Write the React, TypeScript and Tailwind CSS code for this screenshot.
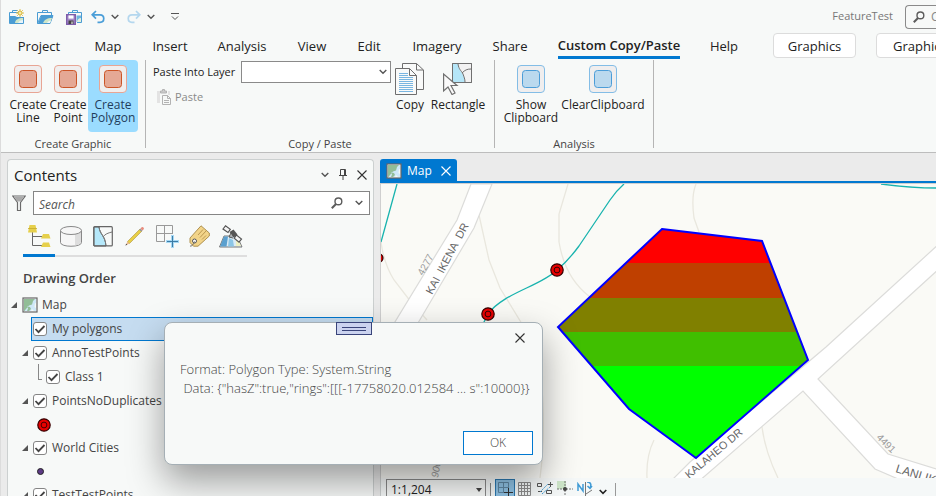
import type { ReactNode } from "react";

const Chevron = ({ className = "" }: { className?: string }) => (
  <svg width="8" height="6" viewBox="0 0 8 6" fill="none" stroke="#555" strokeWidth="1.4" className={className}>
    <path d="M.7 1L4 4.300 7.300 1" />
  </svg>
);

const Magnifier = () => (
  <svg width="12" height="12" viewBox="0 0 12 12" fill="none" stroke="#5c5c5c" strokeWidth="1.4" className="shrink-0">
    <circle cx="7.4" cy="4.4" r="3.4" />
    <path d="M5 7L.8 11.2" strokeWidth="2" />
  </svg>
);

const Cross = ({ size, color }: { size: number; color: string }) => (
  <svg width={size} height={size} viewBox="0 0 10 10" fill="none" stroke={color} strokeWidth="1.1">
    <path d="M.5.5l9 9M9.500.5l-9 9" />
  </svg>
);

const NewProjectIcon = () => (
  <svg width="16" height="16" viewBox="0 0 16 16" fill="none">
    <path d="M3.500 3.500v-2h5M.5 14.500v-11h9M14.500 8v6.500H.5" stroke="#4a9cd3" />
    <path d="M1 7h5l2 1h6v6H1z" fill="#4a9cd3" />
    <path d="M6 14c0-3 3-5 8-5v5z" fill="#cfe6c8" />
    <path d="M9 14c1-2 3-3 5-3v3z" fill="#e8f4fb" />
    <path d="M11 0v8M7 4h8M8.200 1.200l5.600 5.600M13.800 1.200L8.200 6.800" stroke="#dcc04a" />
    <circle cx="11" cy="4" r="2" fill="#f6eab0" stroke="#d9b93e" />
  </svg>
);

const OpenProjectIcon = () => (
  <svg width="17" height="16" viewBox="0 0 17 16" fill="none">
    <path d="M5.500 3.500v-2h5v2M.5 14.500v-11h14V7M.5 14.500L4 6.500h12L13 14.500z" stroke="#4a9cd3" />
    <path d="M4 7h12l-3 7.500H1z" fill="#4a9cd3" />
    <path d="M6 14c1-3 4-5 9-5l-2 5z" fill="#cfe6c8" />
    <path d="M10 14c1-1.500 2-2.500 4-2.500L13 14z" fill="#f3f8fb" />
  </svg>
);

const SaveProjectIcon = () => (
  <svg width="17" height="16" viewBox="0 0 17 16" fill="none">
    <path d="M6.500 3.500v-2h5v2M2.500 5v-1.500h13v10H11" stroke="#4a9cd3" />
    <path d="M10.500 6.500H15V13h-4.500z" fill="#6fb4de" />
    <path d="M11 13c0-2 2-4 4-4v4z" fill="#e3f1e0" />
    <path d="M.7 5.700h8.600v9.600H.7z" fill="#a68cc9" stroke="#7e5dab" strokeWidth="1.400" />
    <path d="M2.500 6.400h5v3.200h-5z" fill="#fff" />
    <path d="M2.500 11.500h5V15h-5z" fill="#444" />
    <path d="M5.500 12.500h1V15h-1z" fill="#fff" />
  </svg>
);

const UndoIcon = ({ color, flip }: { color: string; flip?: boolean }) => (
  <svg width="14" height="14" viewBox="0 0 14 14" fill="none" stroke={color} strokeWidth="1.7">
    <g transform={flip ? "translate(14 0) scale(-1 1)" : undefined}>
      <path d="M5 1L1.200 4.800 5 8.600M1.500 4.800H9c5 0 5 7.500 0 7.500H6.500" />
    </g>
  </svg>
);

const PlaceholderIcon = ({ tone }: { tone: "red" | "blue" }) => (
  <svg width="28" height="28" viewBox="0 0 28 28">
    <rect x=".5" y=".5" width="27" height="27" rx="3.500" fill="#f0eeee" stroke={tone === "red" ? "#e8a594" : "#83bde6"} />
    <rect x="5.500" y="5.500" width="17" height="17" rx="3" fill={tone === "red" ? "#e5a895" : "#bbd9ee"} stroke={tone === "red" ? "#cb5527" : "#4c9dd8"} />
  </svg>
);

const CopyIcon = () => (
  <svg width="30" height="32" viewBox="0 0 30 32" fill="#f9faf9" stroke="#6e6e6e">
    <path d="M7.500.5h14l7 6.500v19.500h-21z" />
    <path d="M21.500.5V7h7" fill="none" />
    <path d="M.5 5.500h14l7 7v19H.5z" />
    <path d="M14.500 5.500v7h7" fill="none" />
    <path d="M4 10.500h9M4 12.500h9M4 14.500h14M4 16.500h14M4 18.500h14M4 20.500h14M4 22.500h14M4 24.500h14M4 26.500h14M4 28.500h14" stroke="#58a5da" strokeWidth=".8" />
  </svg>
);

const RectangleIcon = () => (
  <svg width="30" height="32" viewBox="0 0 30 32" fill="none" stroke="#707070">
    <path d="M9.500.5h19v19h-19z" fill="#f2f2f2" />
    <path d="M10 1h5c1 8 5 7 7 18H10z" fill="#b5e6f8" stroke="none" />
    <path d="M15 1c1 6 3 6 5 10 1 3 2 5 2 8M19 10c3-3 5-4 9-4M9.500.5h19v19h-19z" />
    <path d="M.6 11v17l4.400-4 4 7.500 3-1.500-4-7.500h6z" fill="#fafafa" strokeWidth="1.200" />
  </svg>
);

const PasteIcon = () => (
  <svg width="14" height="16" viewBox="0 0 14 16" fill="none" stroke="#b3b3b3">
    <path d="M0 2h3v12h2V6h6V2h2v4H5v8H0z" fill="#e3e3e3" stroke="none" />
    <path d="M3.500 4v-2h2V.5h2V2h2v2z" fill="#ccc" />
    <path d="M5.500 6.500h5l3 3v6h-8z" fill="#f7f9f8" />
    <path d="M10.500 6.500v3h3M7 11.500h5M7 13.500h5" />
  </svg>
);

const MapIcon = () => (
  <svg width="16" height="16" viewBox="0 0 16 16">
    <rect x="1" y="1" width="14" height="14" fill="#fafafa" stroke="#666" strokeWidth="1.200" />
    <path d="M2 2h12v12H2z" fill="#92bd97" />
    <path d="M14 2v12H7l2-2-1-2-3-.5 1 2-1 2.500H2.500L4 12l3-3.500 3-1L11 4l2-2z" fill="#cfe8f8" />
    <path d="M13 6.500l1-.5v5l-1.500-1zM10 12l2 2H9z" fill="#f6f9f6" />
  </svg>
);

const LayerDrawIcon = () => (
  <svg width="23" height="23" viewBox="0 0 23 23">
    <path d="M4.500 7v13.500H14M4.500 11.500H14" fill="none" stroke="#666" />
    <path d="M1.500 0h6L9 7.500H0zM15 9h6l1.500 4.500H13zM15 17.500h6l1.500 4.500H13z" fill="#e6d04c" />
    <path d="M0 3.500h9" stroke="#c5a92e" strokeWidth=".8" />
  </svg>
);

const CylinderIcon = () => (
  <svg width="22" height="21" viewBox="0 0 22 21" fill="#f6f6f6" stroke="#888">
    <path d="M.5 4.500v12c0 5 21 5 21 0v-12" />
    <path d="M15 8c4-.5 6-2 6-3v11c0 2-3 3-6 3.500z" fill="#ddd" stroke="none" />
    <ellipse cx="11" cy="4.500" rx="10.500" ry="4" />
  </svg>
);

const SelectionIcon = () => (
  <svg width="20" height="21" viewBox="0 0 20 21" fill="none" stroke="#666">
    <path d="M1 1h5c1 8 6 8 7 19H1z" fill="#b5e8fa" />
    <path d="M6 1c1 8 6 8 7 19M10 11c2-3 5-4 9-5" stroke="#777" />
    <rect x=".7" y=".7" width="18.600" height="19.200" rx="1" strokeWidth="1.200" />
  </svg>
);

const PencilIcon = () => (
  <svg width="20" height="20" viewBox="0 0 20 20">
    <path d="M2.500 15.500L15 3l2 2L4.500 17.500z" fill="#e8cf45" stroke="#ad9441" strokeWidth=".6" />
    <path d="M2.500 15.500L.5 19.500l4-2z" fill="#e9b98d" />
    <path d="M1.300 17.700l-.9 1.900 1.900-.9z" fill="#444" />
    <path d="M14.200 3.800l1.300-1.300 2 2-1.300 1.300z" fill="#999" />
    <path d="M15.500 2.500l1.200-1.200c1-.9 3 1.100 2 2l-1.200 1.200z" fill="#e88c7d" />
  </svg>
);

const SnapIcon = () => (
  <svg width="23" height="23" viewBox="0 0 23 23" fill="none">
    <path d="M.5.5h16v16H.5zM8.500.5v16M.5 8.500h16" stroke="#999" />
    <path d="M16.500 9v14M9 16.500h14" stroke="#f7f9f8" strokeWidth="5" />
    <path d="M16.500 10v13M10 16.500h13" stroke="#a6d8f4" strokeWidth="3" />
    <path d="M16.500 11v11M11 16.500h11" stroke="#3c7ca5" />
  </svg>
);

const TagIcon = () => (
  <svg width="21" height="22" viewBox="0 0 21 22">
    <path d="M1 13L12 .8l8.300 7.200v3L9 21.200H4.500L1 17.500z" fill="#f2d489" stroke="#ae9150" />
    <path d="M9 10l5-5.500M11 12.500l6-6.500M13 14.500l4-4" stroke="#bb9851" fill="none" />
    <circle cx="5.500" cy="16" r="2" fill="#fff" stroke="#555" />
    <path d="M5.500 16.500c-1 3-3 5-4.500 4.500" stroke="#666" fill="none" />
  </svg>
);

const SatelliteIcon = () => (
  <svg width="24" height="23" viewBox="0 0 24 23" fill="none">
    <path d="M5 11h13l5 11H.5z" fill="#dcecf5" stroke="#777" />
    <path d="M5 11.500h4L7.500 21.500H1z" fill="#5aa0cf" />
    <path d="M10 13l4 2 1 6.500H9z" fill="#8cc6e6" />
    <path d="M17 15l3 2 2 4h-5z" fill="#eef0c0" />
    <path d="M6.500.8L4 4l5 3.500 2.300-3.200zM17.500 10l-2.300 3.200 4.800 4 2.500-3.200z" fill="#f5f5f5" stroke="#555" strokeWidth="1.200" />
    <path d="M10.500 7l4-2.500 4 5-4 3z" fill="#555" />
    <path d="M12 8l-2 4 4 1" stroke="#555" />
  </svg>
);

const FilterIcon = () => (
  <svg width="14" height="16" viewBox="0 0 14 16" fill="#f7f9f8" stroke="#6b6b6b" strokeWidth="1.200" className="shrink-0">
    <path d="M.8 1h12.400L8.500 7.500v8h-3v-8z" />
    <path d="M2 2h10L8.500 6.500h-3z" fill="#aaa" stroke="none" />
  </svg>
);

const PinIcon = () => (
  <svg width="8" height="11" viewBox="0 0 8 11" fill="none" stroke="#444">
    <path d="M1.500 6.500v-6h5v6M0 6.500h8M4 6.500V11M5.500.5v6" />
  </svg>
);

const PointSymbol = () => (
  <svg width="14" height="14" viewBox="0 0 14 14">
    <circle cx="7" cy="7" r="6.200" fill="#e60000" stroke="#300" strokeWidth="1.200" />
    <circle cx="7" cy="7" r="2.900" fill="#e60000" stroke="#400" />
  </svg>
);

const Qat = () => (
  <nav aria-label="Quick access" className="flex items-center">
    <button aria-label="New project" className="mr-3"><NewProjectIcon /></button>
    <button aria-label="Open project" className="mr-3"><OpenProjectIcon /></button>
    <button aria-label="Save project" className="mr-2"><SaveProjectIcon /></button>
    <button aria-label="Undo" className="mr-1.5"><UndoIcon color="#4a9ed8" /></button>
    <button aria-label="Undo list" className="mr-2"><Chevron /></button>
    <button aria-label="Redo" className="mr-1.5"><UndoIcon color="#b4d7ee" flip /></button>
    <button aria-label="Redo list" className="mr-4"><Chevron /></button>
    <button aria-label="Customize quick access">
      <svg width="8" height="8" viewBox="0 0 8 8" fill="none" stroke="#555"><path d="M0 .5h8M1 3.500l3 3 3-3" /></svg>
    </button>
  </nav>
);

const ribbonTabs = [
  { label: "Project", width: "w-[76px]" },
  { label: "Map", width: "w-[62px]" },
  { label: "Insert", width: "w-[62px]" },
  { label: "Analysis", width: "w-[82px]" },
  { label: "View", width: "w-[58px]" },
  { label: "Edit", width: "w-[56px]" },
  { label: "Imagery", width: "w-[80px]" },
  { label: "Share", width: "w-[66px]" },
];

const Tabs = () => (
  <nav aria-label="Ribbon" className="flex h-6 shrink-0 items-center text-[13px] leading-6 whitespace-nowrap text-[#222]">
    {ribbonTabs.map((t) => (
      <button key={t.label} className={`${t.width} h-6 shrink-0 pt-px text-center`}>{t.label}</button>
    ))}
    <button className="h-6 w-[152px] shrink-0 text-center font-semibold">
      <span className="inline-block border-b-3 border-[#0078d0] pt-px leading-[21px]">Custom Copy/Paste</span>
    </button>
    <button className="h-6 w-[58px] shrink-0 pt-px text-center">Help</button>
    <button className="ml-5 h-[25px] w-[83px] shrink-0 rounded-sm border border-[#dcdcdc] bg-white">Graphics</button>
    <button className="ml-5 h-[25px] w-[120px] shrink-0 rounded-sm border border-[#dcdcdc] bg-white pl-4 text-left">Graphics Layer</button>
  </nav>
);

const BigButton = ({ icon, lines, width, active }: { icon: ReactNode; lines: string[]; width: string; active?: boolean }) => (
  <button className={`flex h-[72px] ${width} shrink-0 flex-col items-center rounded-sm leading-[13px] whitespace-nowrap ${active ? "bg-[#9bdcff] text-[#1f3d5c]" : ""}`}>
    <span className="flex h-[38px] shrink-0 items-center">{icon}</span>
    {lines.map((l) => <span key={l}>{l}</span>)}
  </button>
);

const Group = ({ title, width, children }: { title: string; width: string; children: ReactNode }) => (
  <section aria-label={title} className={`flex ${width} h-[88px] shrink-0 flex-col border-r border-[#b5b5b5]`}>
    <div className="flex h-[78px] shrink-0 items-start">{children}</div>
    <h2 className="text-center text-[11px] leading-3 text-[#444]">{title}</h2>
  </section>
);

const Ribbon = () => (
  <div className="flex shrink-0 border-b border-[#bdbdbd] pt-[3px] pb-1 text-[#222]">
    <Group title="Create Graphic" width="w-[145px]">
      <div className="flex pl-[7px]">
        <BigButton icon={<PlaceholderIcon tone="red" />} lines={["Create", "Line"]} width="w-10" />
        <BigButton icon={<PlaceholderIcon tone="red" />} lines={["Create", "Point"]} width="w-10" />
        <BigButton icon={<PlaceholderIcon tone="red" />} lines={["Create", "Polygon"]} width="w-[50px]" active />
      </div>
    </Group>
    <Group title="Copy / Paste" width="w-[349px]">
      <div className="flex w-[245px] shrink-0 flex-col gap-0.5 pt-px pl-[7px] text-[11px]">
        <div className="flex items-center justify-between">
          <label htmlFor="target-layer" className="whitespace-nowrap">Paste Into Layer</label>
          <span className="grid">
            <select id="target-layer" className="col-start-1 row-start-1 h-[22px] w-[150px] appearance-none border border-[#8a8a8a] bg-white"><option></option></select>
            <Chevron className="pointer-events-none col-start-1 row-start-1 mr-1 self-center justify-self-end" />
          </span>
        </div>
        <button className="flex h-6 items-center gap-1 pl-1 text-[#8a8a8a]"><PasteIcon />Paste</button>
      </div>
      <BigButton icon={<CopyIcon />} lines={["Copy"]} width="w-[38px]" />
      <BigButton icon={<RectangleIcon />} lines={["Rectangle"]} width="w-[58px]" />
    </Group>
    <Group title="Analysis" width="w-[159px]">
      <div className="flex pl-2">
        <BigButton icon={<PlaceholderIcon tone="blue" />} lines={["Show", "Clipboard"]} width="w-14" />
        <BigButton icon={<PlaceholderIcon tone="blue" />} lines={["ClearClipboard"]} width="w-[88px]" />
      </div>
    </Group>
  </div>
);

const LayerCheck = ({ label }: { label: string }) => (
  <label className="flex items-center gap-[5px] whitespace-nowrap">
    <span className="grid">
      <input type="checkbox" defaultChecked className="peer col-start-1 row-start-1 size-[14px] appearance-none rounded-[3px] border border-[#858585] bg-white" />
      <svg width="14" height="14" viewBox="0 0 14 14" fill="none" stroke="#444" strokeWidth="1.800" className="pointer-events-none invisible col-start-1 row-start-1 peer-checked:visible">
        <path d="M2.500 7L5.500 10.200 11.500 4" />
      </svg>
    </span>
    {label}
  </label>
);

const Expander = () => (
  <button aria-label="Collapse" className="mr-[5px] shrink-0">
    <svg width="6" height="6" viewBox="0 0 6 6" fill="#555"><path d="M6 0v6H0z" /></svg>
  </button>
);

const contentTabs = [
  { name: "List by drawing order", icon: <LayerDrawIcon /> },
  { name: "List by data source", icon: <CylinderIcon /> },
  { name: "List by selection", icon: <SelectionIcon /> },
  { name: "List by editing", icon: <PencilIcon /> },
  { name: "List by snapping", icon: <SnapIcon /> },
  { name: "List by labeling", icon: <TagIcon /> },
  { name: "List by imagery", icon: <SatelliteIcon /> },
];

const Contents = () => (
  <aside className="flex w-[367px] shrink-0 flex-col overflow-hidden rounded-t border border-b-0 border-[#ccd0d0] bg-[#f7f9f8] text-[#444]">
    <header className="flex h-[31px] shrink-0 items-center px-1.5 pb-0.5">
      <h1 className="flex-1 text-[15px] text-[#222]">Contents</h1>
      <div className="flex items-center gap-2.5">
        <button aria-label="Pane menu"><Chevron /></button>
        <button aria-label="Pin pane"><PinIcon /></button>
        <button aria-label="Close pane"><Cross size={10} color="#333" /></button>
      </div>
    </header>
    <div className="flex h-6 shrink-0 items-center gap-[7px] pr-[3px] pl-1">
      <FilterIcon />
      <div className="flex h-6 flex-1 items-center gap-3 border border-[#858585] bg-white pr-1.5 pl-[5px]">
        <input aria-label="Search" placeholder="Search" className="h-[22px] min-w-0 flex-1 pt-0.5 italic outline-none placeholder:text-[#555]" />
        <Magnifier />
        <button aria-label="Search options"><Chevron /></button>
      </div>
    </div>
    <div className="ml-[15px] flex h-[42px] w-56 shrink-0 border-b-2 border-[#dedede]">
      {contentTabs.map((t, i) => (
        <button key={t.name} aria-label={t.name} className={`-mb-0.5 flex h-[42px] w-8 shrink-0 items-center justify-center border-b-3 pt-[3px] ${i === 0 ? "border-[#0078d0]" : "border-transparent"}`}>{t.icon}</button>
      ))}
    </div>
    <h2 className="flex h-9 shrink-0 items-center pt-2 pl-[15px] text-[13px] font-semibold">Drawing Order</h2>
    <ul>
      <li className="flex h-6 items-center pl-[3px]"><Expander /><MapIcon /><span className="ml-1">Map</span></li>
      <li className="ml-[23px] flex h-6 items-center border border-[#0078d0] bg-[#c5dcf0] pl-px"><LayerCheck label="My polygons" /></li>
      <li className="flex h-6 items-center pl-[14px]"><Expander /><LayerCheck label="AnnoTestPoints" /></li>
      <li className="flex h-6 items-center pl-[30px]">
        <span className="mr-1 -mt-[10px] h-4 w-1 border-b border-l border-[#888]" /><LayerCheck label="Class 1" />
      </li>
      <li className="flex h-6 items-center pl-[14px]"><Expander /><LayerCheck label="PointsNoDuplicates" /></li>
      <li className="flex h-[23px] items-center pl-[29px]"><PointSymbol /></li>
      <li className="flex h-6 items-center pl-[14px]"><Expander /><LayerCheck label="World Cities" /></li>
      <li className="flex h-[23px] items-center pl-[29px]"><span className="size-[7px] rounded-full border border-[#222] bg-[#5d3a86]" /></li>
      <li className="flex h-6 items-center pl-[14px]"><Expander /><LayerCheck label="TestTestPoints" /></li>
    </ul>
  </aside>
);

const MapPoint = ({ x, y }: { x: number; y: number }) => (
  <g fill="#e60000" stroke="#300">
    <circle cx={x} cy={y} r="6.200" strokeWidth="1.200" />
    <circle cx={x} cy={y} r="2.900" />
  </g>
);

const MapCanvas = () => (
  <svg viewBox="381 184 555 294" preserveAspectRatio="xMinYMin slice" className="size-full" role="img" aria-label="Map of roads with striped polygon">
    <defs>
      <clipPath id="shape"><path d="M662 229L762 241 808 360 696 458 629 409 558 327z" /></clipPath>
    </defs>
    <path d="M381 184h555v294H381z" fill="#fafaf6" />
    <g fill="none" stroke="#e9e7de" strokeWidth="1.300">
      <path d="M381 242q3 22 13 38l17 22 16 18M568 184q-3 10-9 30v28q6 36 31 55M479 215l10 45 11 28 22 36 19 50q5 60-1 104M696 184q-5 12-2 34l5 14M762 427q3 24 16 51M654 440q-8 16-7 38" />
    </g>
    <g fill="#fff" stroke="#dcdcda" strokeWidth="1.200">
      <path d="M471 184L457 220 384 340H408L474 228 492 184z" />
      <path d="M940 243L826 347 690 462 670 482H698L803 391 875 469 905 482H940V470L888 454 818 379 940 268z" />
    </g>
    <g fill="none" stroke="#18b3ae" strokeWidth="1.300">
      <path d="M397 184L381 242M624 184q-8 7-14 16l-31 46q-11 15-22 24c-16 16-54 23-69 44l-6 12M881 184q31 4 55 4" />
    </g>
    <circle cx="379" cy="258" r="4" fill="#e60000" stroke="#300" strokeWidth="1.200" />
    <MapPoint x={557} y={270} />
    <MapPoint x={488} y={314} />
    <g clipPath="url(#shape)" shapeRendering="crispEdges">
      <path d="M550 220h270v43H550z" fill="#f00" />
      <path d="M550 263h270v35H550z" fill="#bf4000" />
      <path d="M550 298h270v34H550z" fill="#808000" />
      <path d="M550 332h270v34H550z" fill="#40bf00" />
      <path d="M550 366h270v100H550z" fill="#0f0" />
    </g>
    <path d="M662 229L762 241 808 360 696 458 629 409 558 327z" fill="none" stroke="#00f" strokeWidth="2" />
    <g fontFamily="Liberation Sans, sans-serif" fontSize="12" fill="#666">
      <text transform="translate(432 295) rotate(-62)" fontSize="11">KAI&#160;&#160;IKENA&#160;&#160;DR</text>
      <text transform="translate(689 479) rotate(-40)" fontSize="11">KALAHEO DR</text>
      <text transform="translate(895 472) rotate(17)">LANI IKENA</text>
      <g fontSize="10" fill="#999">
        <text transform="translate(423 276) rotate(-61)">4277</text>
        <text transform="translate(876 438) rotate(45)">4491</text>
        <text transform="translate(438 478) rotate(-80)" fontStyle="italic">900</text>
      </g>
    </g>
  </svg>
);

const MapBar = () => (
  <footer className="flex h-[18px] shrink-0 items-start overflow-hidden border-l border-[#ccd0d0] bg-[#f5f8f8] pt-px pl-[5px]">
    <span className="grid">
      <select aria-label="Map scale" className="col-start-1 row-start-1 h-[22px] w-[100px] appearance-none border border-[#8a8a8a] bg-[#f7f9f8] pl-1 text-xs text-[#222]"><option>1:1,204</option></select>
      <svg width="6" height="4" viewBox="0 0 6 4" fill="#444" className="pointer-events-none col-start-1 row-start-1 mr-1 self-center justify-self-end"><path d="M0 0h6L3 4z" /></svg>
    </span>
    <span className="mx-1 mt-1 h-4 w-px shrink-0 bg-[#888]" />
    <button aria-label="Snapping" className="flex h-5 w-5 shrink-0 items-center justify-center border border-[#2b78b0] bg-[#8fc2e4]">
      <svg width="18" height="18" viewBox="0 0 18 18" fill="none" stroke="#5f87a3"><path d="M2.500 2.500h10v10h-10zM7.500 2.500v10M2.500 7.500h10" /><path d="M12.500 8v9M8 12.500h9" stroke="#333" /></svg>
    </button>
    <button aria-label="Grid" className="mt-[3px] ml-[3px] shrink-0">
      <svg width="13" height="14" viewBox="0 0 13 14" fill="none" stroke="#8c8c8c"><path d="M.5.5h12v13H.5zM3.500.5v13M6.500.5v13M9.500.5v13M.5 3.500h12M.5 6.500h12M.5 9.500h12" /></svg>
    </button>
    <button aria-label="Inference" className="mt-[3px] ml-1.5 shrink-0">
      <svg width="16" height="14" viewBox="0 0 16 14" fill="none" stroke="#555"><path d="M.5 1.500h4v3h-4zM9.500 8.500h5v3h-5zM11 2.500h5M13.500 0v5M1 9.500h4" /><path d="M3 10l8-8M5 12l8-7" stroke="#45a0d8" strokeDasharray="2 1" /></svg>
    </button>
    <button aria-label="Constraints" className="mt-0.5 ml-1 shrink-0">
      <svg width="16" height="15" viewBox="0 0 16 15" fill="none"><path d="M0 0h9v8H0z" fill="#cfe7ca" /><path d="M8 0v15M0 8h16" stroke="#777" strokeDasharray="2 1" /><circle cx="8" cy="8" r="2" fill="#444" /></svg>
    </button>
    <button aria-label="Correction" className="mt-[3px] ml-1 shrink-0">
      <svg width="16" height="14" viewBox="0 0 16 14" fill="none" stroke="#409bd5" strokeWidth="1.500"><path d="M1 9V2l5 7V2M10 0c5 0 4 4 3 6M10.500 4l2.500 2.500L15 4" /><path d="M8.500 0v14M9 12l6-4" stroke="#777" strokeWidth="1" /></svg>
    </button>
    <button aria-label="More tools" className="mt-2.5 ml-1.5 shrink-0">
      <svg width="8" height="6" viewBox="0 0 8 6" fill="none" stroke="#222" strokeWidth="1.600"><path d="M.7 1L4 4.300 7.300 1" /></svg>
    </button>
    <span className="mt-1 ml-2 h-4 w-px bg-[#999]" />
  </footer>
);

const MapView = () => (
  <main className="flex min-w-0 flex-1 flex-col">
    <div className="flex h-6 shrink-0 items-start border-b-2 border-[#0078d0]">
      <div className="flex h-[22px] w-[77px] items-center rounded-t-[3px] bg-[#0078d0] px-1.5 pt-0.5 text-xs text-white">
        <MapIcon />
        <span className="ml-[5px] flex-1">Map</span>
        <button aria-label="Close map"><Cross size={10} color="#fff" /></button>
      </div>
    </div>
    <div className="min-h-0 flex-1 overflow-hidden border-t border-l border-[#cfcfcf]"><MapCanvas /></div>
    <MapBar />
  </main>
);

const MessageBox = () => (
  <div role="dialog" aria-label="Clipboard contents" className="absolute top-[322px] left-[163px] flex h-[143px] w-[379px] flex-col rounded-lg border border-[#a5afb5] bg-[#f7f9f8] text-[#444] shadow-[0_16px_36px_rgba(0,0,0,0.38)]">
    <div className="absolute -top-px left-[171px] flex h-[13px] w-9 flex-col items-center justify-center gap-0.5 border border-[#39447a] bg-[#cbd3ef]">
      <span className="h-px w-6 bg-[#39447a]" />
      <span className="h-px w-6 bg-[#39447a]" />
    </div>
    <div className="flex h-[37px] shrink-0 items-start justify-end pt-[10px] pr-[17px]">
      <button aria-label="Close"><Cross size={10} color="#333" /></button>
    </div>
    <p className="flex-1 pl-[15px] text-[13px] leading-[19px] font-light whitespace-pre">{'Format: Polygon Type: System.String\n Data: {"hasZ":true,"rings":[[[-17758020.012584 ... s":10000}}'}</p>
    <button className="mr-[9px] mb-[9px] h-6 w-[70px] self-end border border-[#0078d0] bg-white font-light">OK</button>
  </div>
);

export default function App() {
  return (
    <div className="relative flex h-screen flex-col overflow-hidden border-l border-[#dcdcdc] bg-[#f7f9f8] font-['Open_Sans',sans-serif] text-xs">
      <div className="flex h-[33px] shrink-0 items-center justify-between pl-2">
        <Qat />
        <div className="flex items-center">
          <span className="mr-3 text-[11px] text-[#777]">FeatureTest</span>
          <label className="flex h-6 w-[31px] items-center gap-1.5 overflow-hidden rounded-l-sm border border-r-0 border-[#8a8a8a] pl-[7px] text-[#777]">
            <Magnifier />
            <input aria-label="Command search" placeholder="Command Search" className="w-28 shrink-0 outline-none placeholder:text-[#888]" />
          </label>
        </div>
      </div>
      <Tabs />
      <Ribbon />
      <div className="flex min-h-0 flex-1 gap-1.5 bg-[#ebebeb] pt-1.5 pl-1.5">
        <Contents />
        <MapView />
      </div>
      <MessageBox />
    </div>
  );
}
